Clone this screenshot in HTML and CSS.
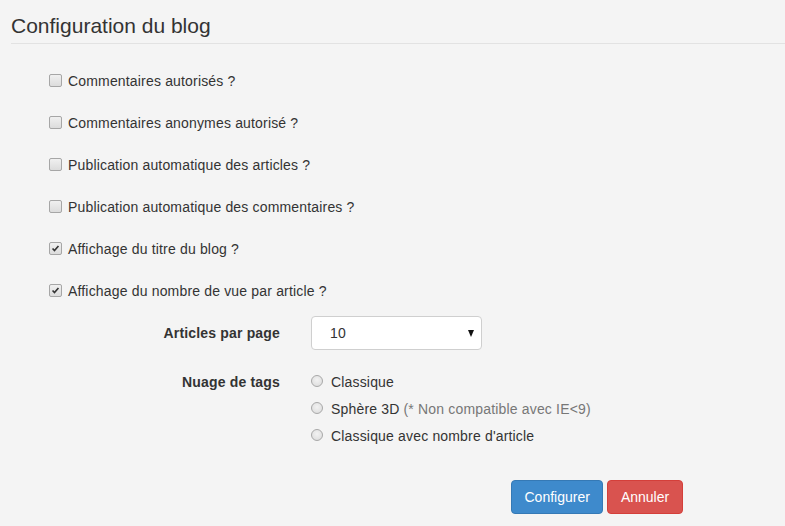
FILE: index.html
```html
<!DOCTYPE html>
<html lang="fr">
<head>
<meta charset="utf-8">
<title>Configuration du blog</title>
<link rel="stylesheet" href="styles.css">
</head>
<body>
<div class="page">
  <h3 class="title">Configuration du blog</h3>
  <form class="form">
    <div class="checks">
      <label class="check"><span class="cb"></span><span>Commentaires autorisés ?</span></label>
      <label class="check"><span class="cb"></span><span>Commentaires anonymes autorisé ?</span></label>
      <label class="check"><span class="cb"></span><span>Publication automatique des articles ?</span></label>
      <label class="check"><span class="cb"></span><span>Publication automatique des commentaires ?</span></label>
      <label class="check"><span class="cb checked"><svg viewBox="0 0 13 13" width="13" height="13"><path d="M3 6.5 L5.3 9 L10 3.6" fill="none" stroke="#333" stroke-width="1.9"/></svg></span><span>Affichage du titre du blog ?</span></label>
      <label class="check"><span class="cb checked"><svg viewBox="0 0 13 13" width="13" height="13"><path d="M3 6.5 L5.3 9 L10 3.6" fill="none" stroke="#333" stroke-width="1.9"/></svg></span><span>Affichage du nombre de vue par article ?</span></label>
    </div>
    <div class="group group-select">
      <div class="glabel">Articles par page</div>
      <div class="gcontrol">
        <div class="select"><span>10</span><span class="arrow"></span></div>
      </div>
    </div>
    <div class="group group-radios">
      <div class="glabel">Nuage de tags</div>
      <div class="gcontrol radios">
        <label class="radio"><span class="rb"></span><span>Classique</span></label>
        <label class="radio"><span class="rb"></span><span>Sphère 3D <span class="muted">(* Non compatible avec IE&lt;9)</span></span></label>
        <label class="radio"><span class="rb"></span><span>Classique avec nombre d'article</span></label>
      </div>
    </div>
    <div class="actions">
      <button type="button" class="btn btn-primary">Configurer</button>
      <button type="button" class="btn btn-danger">Annuler</button>
    </div>
  </form>
</div>
</body>
</html>
```
FILE: styles.css
```css
html, body {
  margin: 0;
  padding: 0;
  background: #f4f4f4;
}
body {
  font-family: "Liberation Sans", Arial, sans-serif;
  font-size: 14px;
  color: #333;
}
.page {
  padding-left: 11px;
}
.title {
  margin: 0;
  padding-top: 14px;
  padding-bottom: 6px;
  font-size: 21px;
  font-weight: normal;
  line-height: 23px;
  color: #333;
  border-bottom: 1px solid #e2e2e2;
}
.form {
  padding-top: 16px;
  letter-spacing: 0.17px;
}
.checks {
  padding-left: 38px;
  display: flex;
  flex-direction: column;
}
.check {
  height: 42px;
  display: flex;
  align-items: center;
  gap: 6px;
}
.cb {
  width: 11px;
  height: 11px;
  border: 1px solid #a6a6a6;
  border-radius: 2px;
  background: linear-gradient(#f0f0f0, #dcdcdc);
  display: inline-flex;
  align-items: center;
  justify-content: center;
  position: relative;
  top: -1px;
  flex: none;
}
.cb svg {
  width: 11px;
  height: 11px;
}
.group {
  display: grid;
  grid-template-columns: 269px 1fr;
  column-gap: 31px;
}
.glabel {
  font-weight: bold;
  text-align: right;
}
.group-select {
  margin-top: 4px;
  align-items: center;
}
.select {
  height: 32px;
  border: 1px solid #cfcfcf;
  border-radius: 4px;
  background: #fff;
  box-sizing: content-box;
  display: flex;
  align-items: center;
  justify-content: space-between;
  padding: 0 7px 0 18px;
  width: 144px;
}
.arrow {
  width: 0;
  height: 0;
  border-left: 3.5px solid transparent;
  border-right: 3.5px solid transparent;
  border-top: 7px solid #111;
  margin-top: 1px;
}
.group-radios {
  margin-top: 22px;
}
.group-radios .glabel {
  line-height: 20px;
}
.radios {
  display: flex;
  flex-direction: column;
  gap: 7px;
}
.radio {
  height: 20px;
  display: flex;
  align-items: center;
  gap: 8px;
}
.rb {
  width: 10px;
  height: 10px;
  border: 1px solid #a8a8a8;
  border-radius: 50%;
  background: radial-gradient(circle at 50% 40%, #f2f2f2, #dadada);
  flex: none;
  position: relative;
  top: -1px;
}
.muted {
  color: #777;
}
.actions {
  margin-top: 34px;
  padding-left: 500px;
  display: flex;
  gap: 4px;
  letter-spacing: 0;
}
.btn {
  font-family: "Liberation Sans", Arial, sans-serif;
  font-size: 14px;
  line-height: 20px;
  padding: 6px 12.5px;
  border-radius: 4px;
  border: 1px solid transparent;
  color: #fff;
  cursor: pointer;
}
.btn-primary {
  background: #3e8acc;
  border-color: #3579b5;
}
.btn-danger {
  background: #d9534f;
  border-color: #d43f3a;
}
```
